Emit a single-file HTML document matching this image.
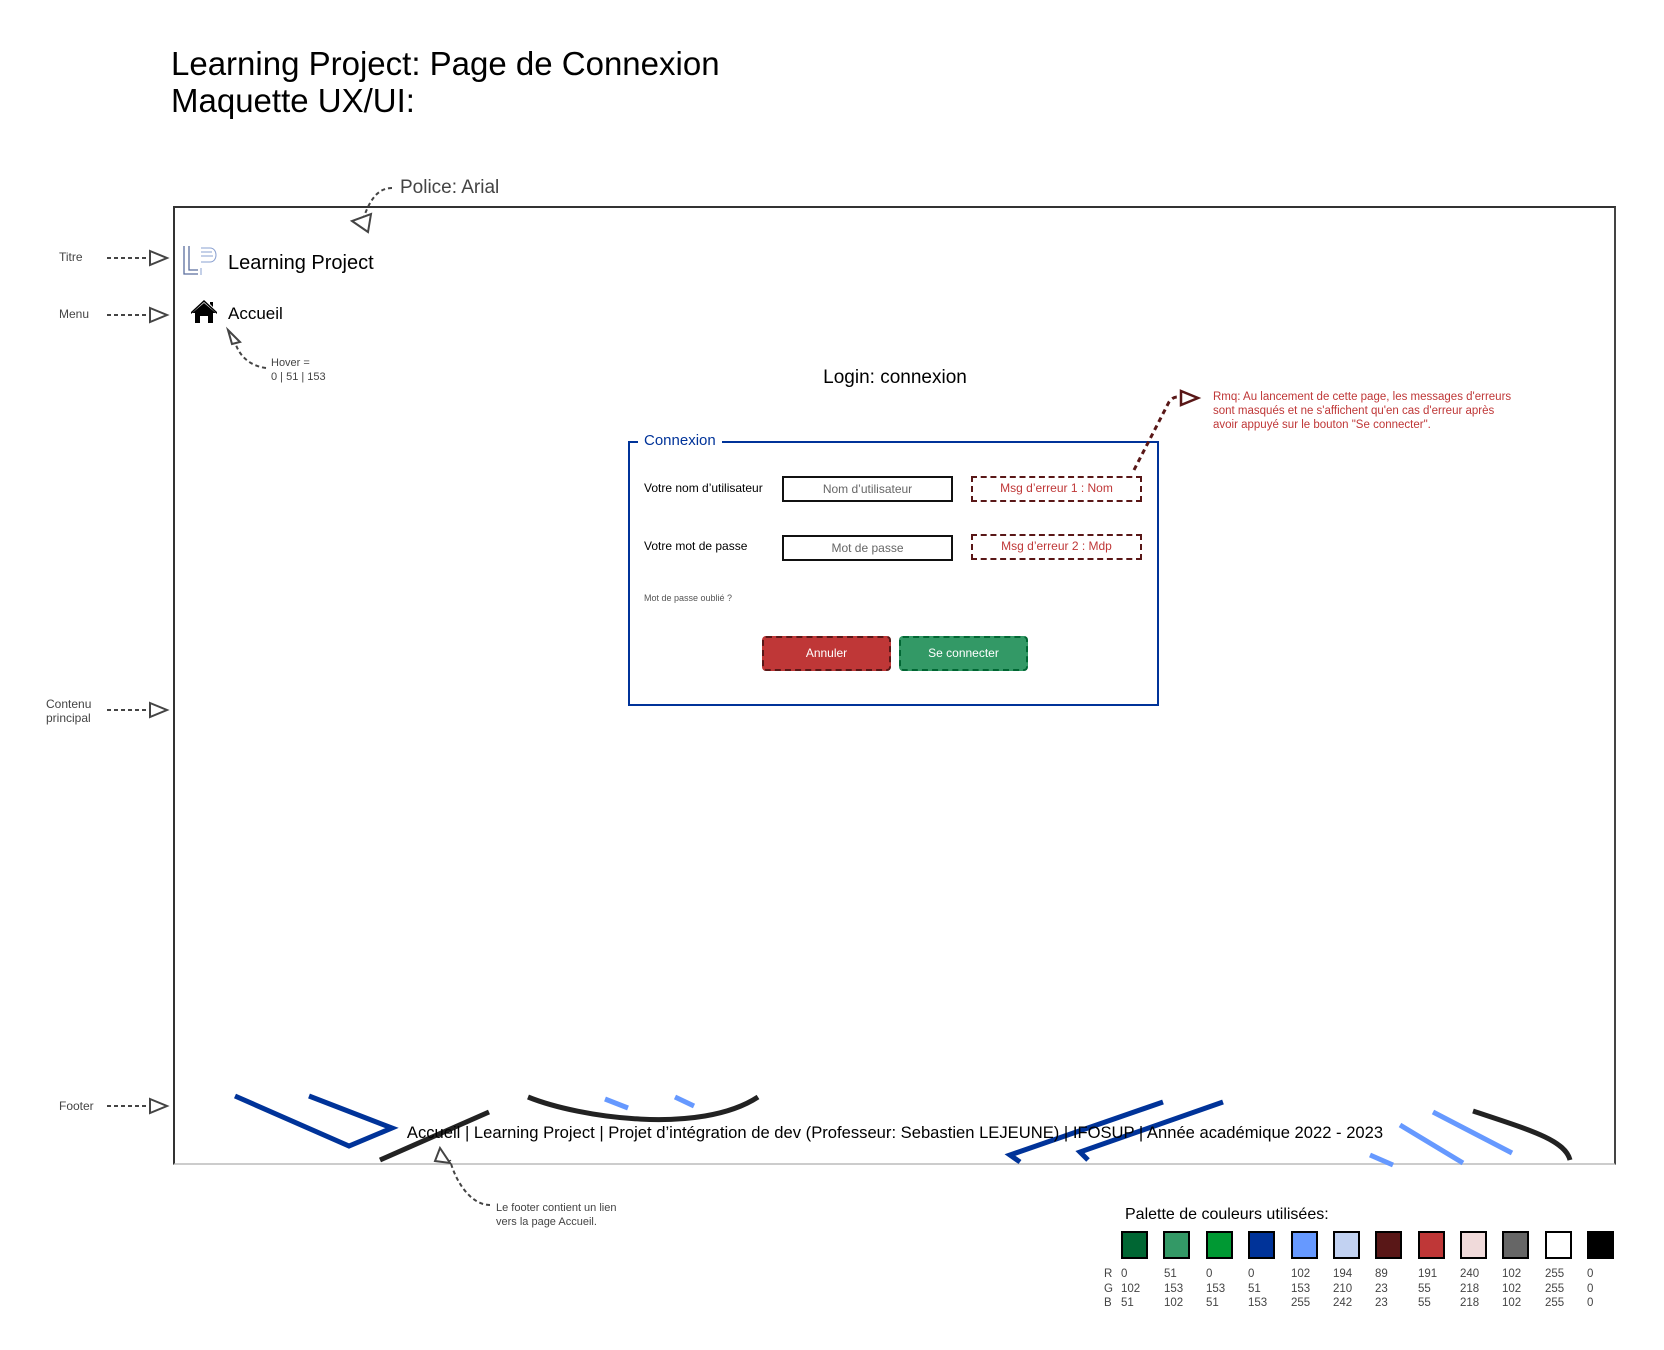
<!DOCTYPE html>
<html><head><meta charset="utf-8"><style>
*{margin:0;padding:0;box-sizing:border-box}
body{width:1664px;height:1350px;background:#fff;position:relative;overflow:hidden;font-family:"Liberation Sans",Arial,sans-serif;color:#000}
.a{position:absolute;white-space:nowrap}
.lbl{font-size:12px;color:#444}
.inp{position:absolute;border:2px solid #111;font-size:12px;color:#666;text-align:center;line-height:22px;background:#fff}
.err{position:absolute;border:2px dashed #591717;font-size:12px;color:#bf3737;text-align:center;line-height:20px}
.btn{position:absolute;border:2px dashed;border-radius:4px;font-size:12px;color:#fff;text-align:center;line-height:30px}
.sw{position:absolute;top:1231px;width:27px;height:28px;border:2px solid #000}
.rgb{position:absolute;font-size:11.5px;color:#444;line-height:14.5px}
</style></head><body>
<div class="a" style="left:171px;top:45px;font-size:33px;line-height:37px">Learning Project: Page de Connexion<br>Maquette UX/UI:</div>
<div class="a" style="left:400px;top:177px;font-size:19px;color:#444">Police: Arial</div>
<div style="position:absolute;left:173px;top:206px;width:1443px;height:959px;border:2px solid #333;border-bottom-color:#ccc;border-right-color:#444"></div>
<div class="a lbl" style="left:59px;top:250px">Titre</div>
<div class="a lbl" style="left:59px;top:307px">Menu</div>
<div class="a lbl" style="left:46px;top:697px;line-height:14px">Contenu<br>principal</div>
<div class="a lbl" style="left:59px;top:1099px">Footer</div>
<div class="a" style="left:228px;top:252px;font-size:20px">Learning Project</div>
<div class="a" style="left:228px;top:304px;font-size:17px">Accueil</div>
<div class="a" style="left:271px;top:356px;font-size:11px;color:#444;line-height:14px">Hover =<br>0 | 51 | 153</div>
<div class="a" style="left:0;width:1790px;text-align:center;top:367px;font-size:19px">Login: connexion</div>
<div style="position:absolute;left:628px;top:441px;width:531px;height:265px;border:2px solid #003399"></div>
<div class="a" style="left:638px;top:432px;background:#fff;padding:0 6px;font-size:15px;color:#003399">Connexion</div>
<div class="a" style="left:644px;top:481px;font-size:12px">Votre nom d’utilisateur</div>
<div class="a" style="left:644px;top:539px;font-size:12px">Votre mot de passe</div>
<div class="inp" style="left:782px;top:476px;width:171px;height:26px">Nom d’utilisateur</div>
<div class="inp" style="left:782px;top:535px;width:171px;height:26px">Mot de passe</div>
<div class="err" style="left:971px;top:476px;width:171px;height:26px">Msg d’erreur 1 : Nom</div>
<div class="err" style="left:971px;top:534px;width:171px;height:26px">Msg d’erreur 2 : Mdp</div>
<div class="a" style="left:644px;top:593px;font-size:9px;color:#555">Mot de passe oublié ?</div>
<div class="btn" style="left:762px;top:636px;width:129px;height:35px;background:#bf3737;border-color:#591717">Annuler</div>
<div class="btn" style="left:899px;top:636px;width:129px;height:35px;background:#339966;border-color:#006633">Se connecter</div>
<div class="a" style="left:1213px;top:390px;font-size:11.5px;color:#bf3737;line-height:14px">Rmq: Au lancement de cette page, les messages d'erreurs<br>sont masqués et ne s'affichent qu'en cas d'erreur après<br>avoir appuyé sur le bouton "Se connecter".</div>
<svg style="position:absolute;left:0;top:0" width="1664" height="1350">
<g fill="none" stroke="#444" stroke-width="2" stroke-dasharray="4,3">
<path d="M107 258H150M107 315H150M107 710H150M107 1106H150"/>
<path d="M392 188C375 188 368 205 362 222"/>
<path d="M266 368C250 366 240 356 236 345"/>
<path d="M490 1205C470 1205 455 1180 450 1160"/>
</g>
<g fill="#fff" stroke="#444" stroke-width="2">
<path d="M150 251L167 258L150 265Z M150 308L167 315L150 322Z M150 703L167 710L150 717Z M150 1099L167 1106L150 1113Z"/>
<path d="M352 221L368 232L371 214Z"/>
<path d="M228 330L240 342L232 344Z"/>
<path d="M440 1148L450 1163L435 1161Z"/>
</g>
<path d="M1134 470L1169 402C1175 394 1180 398 1185 398" fill="none" stroke="#591717" stroke-width="3" stroke-dasharray="5,4"/>
<path d="M1181 391L1198 398L1181 405Z" fill="#fff" stroke="#591717" stroke-width="2.5"/>
<g fill="none" stroke="#5a6e9e" stroke-width="1.3"><path d="M184 246V274H198M189 246V270H198"/></g>
<g fill="none" stroke="#8aa0d0" stroke-width="1"><path d="M201 248H210C218 248 218 262 210 262H201M201 252H212M201 256H213M201 268V275"/></g>
<path d="M192 313L204 302L216 313H213V323H208V316H200V323H195V313Z M204 300L191 312V314L204 303L217 314V312Z M210 302H213V307L210 304Z" fill="#000"/>
<g fill="none" stroke-width="5">
<path d="M235 1096L349 1146L392 1128L309 1096" stroke="#003399"/>
<path d="M380 1160L489 1112" stroke="#222"/>
<path d="M528 1097C580 1118 700 1135 758 1097" stroke="#222"/>
<path d="M605 1099L628 1108M675 1097L694 1106" stroke="#6699ff"/>
<path d="M1163 1102L1010 1155L1020 1162M1223 1102L1080 1152L1088 1160" stroke="#003399"/>
<path d="M1370 1155L1393 1165M1400 1125L1463 1163M1433 1112L1512 1153" stroke="#6699ff"/>
<path d="M1473 1111C1530 1130 1565 1140 1570 1160" stroke="#222"/>
</g>
</svg>
<div class="a" style="left:0;width:1790px;text-align:center;top:1123px;font-size:16.6px">Accueil | Learning Project | Projet d’intégration de dev (Professeur: Sebastien LEJEUNE) | IFOSUP | Année académique 2022 - 2023</div>
<div class="a" style="left:496px;top:1201px;font-size:11px;color:#444;line-height:14px">Le footer contient un lien<br>vers la page Accueil.</div>
<div class="a" style="left:1125px;top:1206px;font-size:16px">Palette de couleurs utilisées:</div>
<div class="sw" style="left:1121px;background:#006633"></div>
<div class="sw" style="left:1163px;background:#339966"></div>
<div class="sw" style="left:1206px;background:#009933"></div>
<div class="sw" style="left:1248px;background:#003399"></div>
<div class="sw" style="left:1291px;background:#6699ff"></div>
<div class="sw" style="left:1333px;background:#c2d2f2"></div>
<div class="sw" style="left:1375px;background:#591717"></div>
<div class="sw" style="left:1418px;background:#bf3737"></div>
<div class="sw" style="left:1460px;background:#f0dada"></div>
<div class="sw" style="left:1502px;background:#666"></div>
<div class="sw" style="left:1545px;background:#fff"></div>
<div class="sw" style="left:1587px;background:#000"></div>
<div class="rgb" style="left:1104px;top:1267px">R<br>G<br>B</div>
<div class="rgb" style="left:1121px;top:1267px">0<br>102<br>51</div>
<div class="rgb" style="left:1164px;top:1267px">51<br>153<br>102</div>
<div class="rgb" style="left:1206px;top:1267px">0<br>153<br>51</div>
<div class="rgb" style="left:1248px;top:1267px">0<br>51<br>153</div>
<div class="rgb" style="left:1291px;top:1267px">102<br>153<br>255</div>
<div class="rgb" style="left:1333px;top:1267px">194<br>210<br>242</div>
<div class="rgb" style="left:1375px;top:1267px">89<br>23<br>23</div>
<div class="rgb" style="left:1418px;top:1267px">191<br>55<br>55</div>
<div class="rgb" style="left:1460px;top:1267px">240<br>218<br>218</div>
<div class="rgb" style="left:1502px;top:1267px">102<br>102<br>102</div>
<div class="rgb" style="left:1545px;top:1267px">255<br>255<br>255</div>
<div class="rgb" style="left:1587px;top:1267px">0<br>0<br>0</div>
</body></html>
